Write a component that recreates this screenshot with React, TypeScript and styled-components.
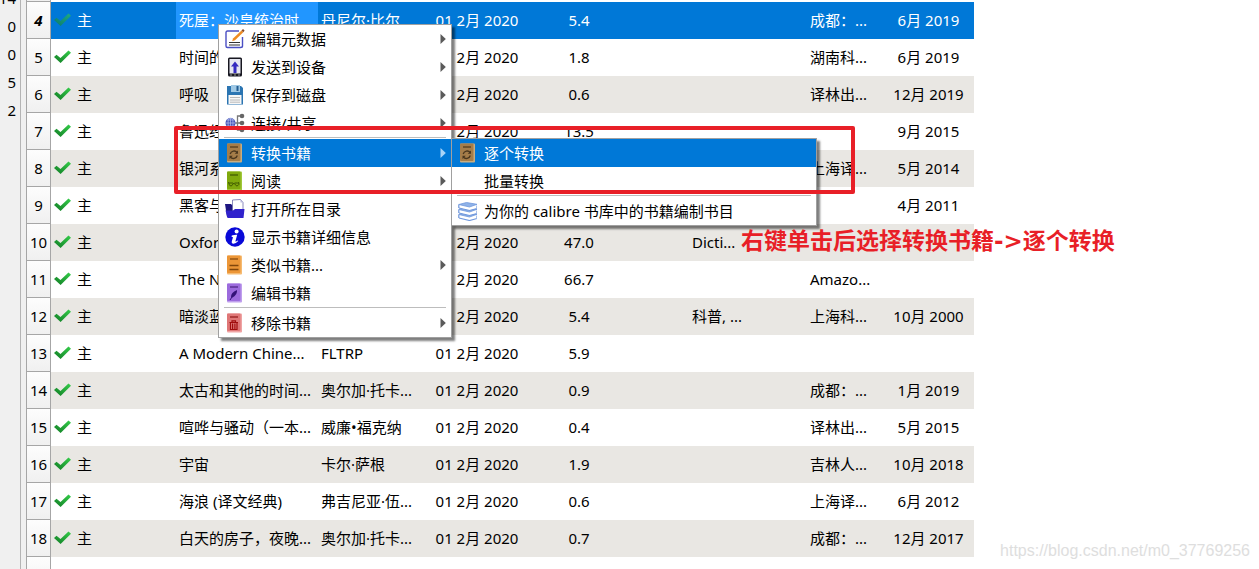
import React from "react";
import styled, { createGlobalStyle } from "styled-components";

const GlobalStyle = createGlobalStyle`
  * { box-sizing: border-box; }
  body {
    margin: 0;
    background: #fff;
    color: #000;
    font: 15px/20px "Noto Sans", "Noto Sans CJK SC", sans-serif;
  }
`;

const Page = styled.main`
  position: relative;
  display: flex;
  height: 100vh;
  overflow: hidden;
`;

const Sidebar = styled.aside`
  flex: none;
  width: 21px;
  height: 100%;
  background: #f0f0f0;
  border-right: 1px solid #b4b4b4;
`;

const CountList = styled.ul`
  list-style: none;
  margin: -16px 0 0;
  padding: 0;
  display: flex;
  flex-direction: column;
  align-items: flex-end;
`;

const Count = styled.li`
  height: 28px;
  line-height: 28px;
  padding-right: 4px;
`;

const Splitter = styled.div`
  flex: none;
  width: 5px;
  background: #f0f0f0;
`;

const Books = styled.div`
  flex: 1;
  min-width: 0;
  overflow: hidden;
`;

const Table = styled.table`
  table-layout: fixed;
  width: 948px;
  border-collapse: separate;
  border-spacing: 0;
`;

const Row = styled.tr<{ $selected?: boolean }>`
  height: 37px;
  background: #fff;
  color: ${(p) => (p.$selected ? "#fff" : "#000")};
  &:nth-child(even) {
    background: ${(p) => (p.$selected ? "#0078d7" : "#e9e7e3")};
  }
`;

const CutRow = styled.tr`
  height: 2px;
`;

const CutHead = styled.th`
  padding: 0;
  background: #f0f0f0;
  border: solid #a6a6a6;
  border-width: 0 1px 1px;
`;

const RowHead = styled.th<{ $current?: boolean }>`
  padding: 0;
  text-align: center;
  color: #000;
  font-weight: ${(p) => (p.$current ? 700 : 400)};
  font-style: ${(p) => (p.$current ? "italic" : "normal")};
  background: linear-gradient(#fdfdfd, #f0f0f0);
  border: solid #a6a6a6;
  border-width: 0 1px 1px;
`;

const Cell = styled.td<{ $center?: boolean; $focus?: boolean }>`
  padding: 0 3px 2px;
  white-space: nowrap;
  overflow: hidden;
  text-align: ${(p) => (p.$center ? "center" : "left")};
  background: ${(p) => (p.$focus ? "#2196ff" : "transparent")};
`;

const Device = styled.span`
  display: flex;
  align-items: center;
  gap: 6px;
`;

const Menu = styled.ul<{ $sub?: boolean }>`
  position: absolute;
  left: ${(p) => (p.$sub ? 451 : 218)}px;
  top: ${(p) => (p.$sub ? 138 : 24)}px;
  width: ${(p) => (p.$sub ? 366 : 234)}px;
  margin: 0;
  padding: 0;
  list-style: none;
  background: #fff;
  border: 1px solid #a0a0a0;
  box-shadow: 3px 3px 2px rgba(0, 0, 0, 0.5);
`;

const MenuButton = styled.button<{ $active?: boolean }>`
  display: flex;
  align-items: center;
  width: 100%;
  height: 28px;
  padding: 0 5px 0 6px;
  gap: 6px;
  border: 0;
  font: inherit;
  text-align: left;
  white-space: nowrap;
  color: ${(p) => (p.$active ? "#fff" : "#000")};
  background: ${(p) => (p.$active ? "#0078d7" : "transparent")};
`;

const IconSlot = styled.span`
  display: flex;
  flex: none;
  width: 20px;
  height: 20px;
`;

const Label = styled.span`
  flex: 1;
`;

const Separator = styled.li`
  height: 2px;
  margin: 0 5px;
  border-top: 1px solid #bdbdbd;
`;

const Highlight = styled.div`
  position: absolute;
  left: 174px;
  top: 126px;
  width: 681px;
  height: 68px;
  border: 4px solid #e81f27;
  border-radius: 2px;
  pointer-events: none;
`;

const Note = styled.p`
  position: absolute;
  left: 741px;
  top: 226px;
  margin: 0;
  font-family: "DejaVu Sans", "Noto Sans CJK SC", sans-serif;
  font-size: 23px;
  line-height: 30px;
  font-weight: 700;
  white-space: nowrap;
  color: #e81f27;
`;

const Watermark = styled.p`
  position: absolute;
  right: 9px;
  bottom: 8px;
  margin: 0;
  font: 16px/20px "Liberation Sans", sans-serif;
  color: #dedede;
`;

const Check = ({ faded }: { faded?: boolean }) => (
  <svg width="17" height="14" viewBox="0 0 17 14" opacity={faded ? 0.6 : 1}>
    <defs>
      <linearGradient id="tick" x1="0" x2="1" y1="1" y2="0">
        <stop offset="0" stopColor="#117a25" />
        <stop offset="1" stopColor="#35cf4a" />
      </linearGradient>
    </defs>
    <path d="M0 7l2.5-2.3L6.500 8 14.500.6 17 2.800 6.600 13z" fill="url(#tick)" />
  </svg>
);

const Arrow = ({ active }: { active?: boolean }) => (
  <svg width="6" height="10" viewBox="0 0 6 10">
    <path d="M0.500 0L5.800 5 0.500 10z" fill={active ? "#a9d4f7" : "#5a5a5a"} />
  </svg>
);

const BookIcon = ({ fill, edge, ink, children }: { fill: string; edge: string; ink: string; children: React.ReactNode }) => (
  <svg width="20" height="20" viewBox="0 0 20 20">
    <rect x="2" y="0.500" width="15" height="19" rx="1" fill={edge} />
    <rect x="2" y="0.500" width="13.500" height="17.500" rx="1" fill={fill} />
    <path d="M5 4h8" stroke={ink} strokeWidth="1.200" />
    {children}
  </svg>
);

const icons: Record<string, React.ReactNode> = {
  edit: (
    <svg width="20" height="20" viewBox="0 0 20 20">
      <path d="M14 2H2.500Q1 2 1 3.500v13.500Q1 18.500 2.500 18.500h13Q17.500 18.500 17.500 17V8" fill="#fff" stroke="#4a4fc4" strokeWidth="1.400" />
      <path d="M4 13.500h11M4 16h11" stroke="#333" strokeWidth="1.100" />
      <path d="M8 9.500L16.500 1.500l1.800 1.700-8.300 8-2.800 1z" fill="#ef8c22" />
      <path d="M16.500 1.500L18 0l1.600 1.500-1.300 1.700z" fill="#8c4a20" />
    </svg>
  ),
  device: (
    <svg width="20" height="20" viewBox="0 0 20 20">
      <rect x="3" y="0.500" width="14" height="19" rx="1.500" fill="#171720" />
      <path d="M4.500 2h11v14.500h-11z" fill="#e6e7f1" />
      <path d="M10 4.500l4 5h-2.500v6.500h-3V9.500H6z" fill="#352bc0" />
      <path d="M5 18h2m2 0h2m2 0h2" stroke="#999" />
    </svg>
  ),
  save: (
    <svg width="20" height="20" viewBox="0 0 20 20">
      <path d="M2 1h14l2 2v16.500H2z" fill="#2b75b2" />
      <path d="M6 0h9v7H6z" fill="#9fc8e4" />
      <path d="M11.500 1h2v5h-2z" fill="#215d92" />
      <path d="M3.500 10h13v9h-13z" fill="#f6f6f6" />
      <path d="M5 12.500h10M5 15h10M5 17.200h10" stroke="#aaa" strokeWidth=".8" />
    </svg>
  ),
  share: (
    <svg width="20" height="20" viewBox="0 0 20 20">
      <path d="M9 10h8M12.500 10V3H17M12.500 10v7H17" fill="none" stroke="#777" strokeWidth="1.300" />
      <circle cx="5.500" cy="10" r="5" fill="#4453b8" />
      <path d="M.5 10h10M5.500 5v10M2 7h7M2 13h7" stroke="#b9c3ee" strokeWidth=".7" />
      <ellipse cx="5.500" cy="10" rx="2.500" ry="5" fill="none" stroke="#b9c3ee" strokeWidth=".7" />
      <circle cx="17" cy="3" r="2.300" fill="#666" />
      <circle cx="17" cy="10" r="2.300" fill="#666" />
      <circle cx="17" cy="17" r="2.300" fill="#666" />
    </svg>
  ),
  convert: (
    <BookIcon fill="#a57d49" edge="#c9ad7f" ink="#4c371b">
      <path d="M5.200 11a4 4 0 0 1 7-1.500M12.300 12.500a4 4 0 0 1-7 1.500" fill="none" stroke="#4a371e" strokeWidth="1.300" />
      <path d="M13 7.500v3.300H9.700zM4.500 16v-3.300h3.300z" fill="#4a371e" />
    </BookIcon>
  ),
  view: (
    <BookIcon fill="#80a90d" edge="#a1c83b" ink="#3f5800">
      <path d="M3 11.500l1.500.5h3.500l.8 1 .8-1h3l1.500-.5" fill="none" stroke="#3f5800" />
      <path d="M4 12v1.500q2.300 3 4-.5M9.800 13q2 3.500 4 .5V12" fill="none" stroke="#3f5800" />
    </BookIcon>
  ),
  folder: (
    <svg width="20" height="20" viewBox="0 0 20 20">
      <path d="M0 5h6l2 2h9v11H2z" fill="#1d1681" />
      <path d="M7.500 1l8-.5 2.500 3v9H7.500z" fill="#fff" stroke="#6c6cad" strokeWidth=".8" />
      <path d="M15.500.5v3H18z" fill="#b9b9dd" />
      <path d="M0.500 11.500h7.500l2-1.500h9.500L18.500 19H2.500z" fill="#3022cc" />
    </svg>
  ),
  info: (
    <svg width="20" height="20" viewBox="0 0 20 20">
      <circle cx="10" cy="10" r="9.700" fill="#0909d8" />
      <circle cx="11.600" cy="4.500" r="2" fill="#fff" />
      <path d="M6.800 8.500q3-1 5.400-.8l-1.800 6.500q.3.700 2.400-.8l.5.700q-2.800 3-5.300 2.700-1.800-.4-1.200-2.600l1.200-4-1.500-.5z" fill="#fff" />
    </svg>
  ),
  similar: (
    <BookIcon fill="#ec9637" edge="#f6bb72" ink="#81460b">
      <path d="M4.500 10.500h9M4.500 14.500h9" stroke="#81460b" strokeWidth="1.500" />
    </BookIcon>
  ),
  editBook: (
    <BookIcon fill="#9c6bdd" edge="#c0a0ed" ink="#492080">
      <path d="M6 14.500q-.5-5 6-7.500.5 5-4.500 7.500z" fill="#331277" />
      <path d="M5 17l3-4.500" stroke="#331277" />
    </BookIcon>
  ),
  remove: (
    <BookIcon fill="#df7777" edge="#efa4a4" ink="#8d1515">
      <path d="M4.500 9.500h8.500M7 9V7.800h3.500V9" fill="none" stroke="#a00d0d" strokeWidth="1.200" />
      <path d="M5.500 10v6.500H12V10M7.600 10.500v5.500M9.900 10.500v5.500" fill="none" stroke="#a00d0d" strokeWidth="1.200" />
    </BookIcon>
  ),
  catalog: (
    <svg width="20" height="20" viewBox="0 0 20 20">
      {[10, 5, 0].map((y) => (
        <g key={y} transform={`translate(0 ${y})`}>
          <path d="M1 4v3l10.500 2.500L18.500 7.500V4z" fill="#fff" />
          <path d="M1 7l10.500 2.500 7.500-2" fill="none" stroke="#6f97dc" strokeWidth="1.200" />
          <path d="M18.500 4.500v3" stroke="#a9c0ea" />
          <path d="M0.800 3.500L8.500 1.500l10.500 1.800-7.500 2.700z" fill="#8fb2e8" stroke="#6f97dc" strokeWidth=".8" />
          <path d="M0.800 3.500v3.500" stroke="#6f97dc" strokeWidth="1.200" />
        </g>
      ))}
    </svg>
  ),
};

interface Item {
  label: string;
  icon?: string;
  arrow?: boolean;
  active?: boolean;
}

const mainMenu: (Item | null)[] = [
  { label: "编辑元数据", icon: "edit", arrow: true },
  { label: "发送到设备", icon: "device", arrow: true },
  { label: "保存到磁盘", icon: "save", arrow: true },
  { label: "连接/共享", icon: "share", arrow: true },
  null,
  { label: "转换书籍", icon: "convert", arrow: true, active: true },
  { label: "阅读", icon: "view", arrow: true },
  { label: "打开所在目录", icon: "folder" },
  { label: "显示书籍详细信息", icon: "info" },
  { label: "类似书籍...", icon: "similar", arrow: true },
  { label: "编辑书籍", icon: "editBook" },
  null,
  { label: "移除书籍", icon: "remove", arrow: true },
];

const subMenu: (Item | null)[] = [
  { label: "逐个转换", icon: "convert", active: true },
  { label: "批量转换" },
  null,
  { label: "为你的 calibre 书库中的书籍编制书目", icon: "catalog" },
];

const ContextMenu = ({ items, sub }: { items: (Item | null)[]; sub?: boolean }) => (
  <Menu $sub={sub} role="menu">
    {items.map((item, i) =>
      item === null ? (
        <Separator key={i} role="separator" />
      ) : (
        <li key={i} role="none">
          <MenuButton type="button" role="menuitem" $active={item.active}>
            <IconSlot>{item.icon && icons[item.icon]}</IconSlot>
            <Label>{item.label}</Label>
            {item.arrow && <Arrow active={item.active} />}
          </MenuButton>
        </li>
      )
    )}
  </Menu>
);

// number, title, author, date added, size, tags, publisher, published
type Book = [number, string, string, string, string, string, string, string];

const added = "01 2月 2020";

const books: Book[] = [
  [4, "死屋：沙皇统治时...", "丹尼尔·比尔", added, "5.4", "", "成都：...", "6月 2019"],
  [5, "时间的秩序", "", added, "1.8", "", "湖南科...", "6月 2019"],
  [6, "呼吸", "", added, "0.6", "", "译林出...", "12月 2019"],
  [7, "鲁迅经典", "", added, "13.5", "", "", "9月 2015"],
  [8, "银河系", "", "", "", "", "上海译...", "5月 2014"],
  [9, "黑客与", "", "", "", "", "", "4月 2011"],
  [10, "Oxford", "", added, "47.0", "Dicti...", "", ""],
  [11, "The New", "", added, "66.7", "", "Amazo...", ""],
  [12, "暗淡蓝点", "", added, "5.4", "科普, ...", "上海科...", "10月 2000"],
  [13, "A Modern Chine...", "FLTRP", added, "5.9", "", "", ""],
  [14, "太古和其他的时间...", "奥尔加·托卡...", added, "0.9", "", "成都：...", "1月 2019"],
  [15, "喧哗与骚动（一本...", "威廉•福克纳", added, "0.4", "", "译林出...", "5月 2015"],
  [16, "宇宙", "卡尔·萨根", added, "1.9", "", "吉林人...", "10月 2018"],
  [17, "海浪 (译文经典)", "弗吉尼亚·伍...", added, "0.6", "", "上海译...", "6月 2012"],
  [18, "白天的房子，夜晚...", "奥尔加·托卡...", added, "0.7", "", "成都：...", "12月 2017"],
];

const columns = [25, 125, 142, 112, 94, 110, 55, 118, 76, 91];

export default function App() {
  return (
    <Page>
      <GlobalStyle />
      <Sidebar>
        <CountList>
          {["14", "0", "0", "5", "2"].map((n, i) => (
            <Count key={i}>{n}</Count>
          ))}
        </CountList>
      </Sidebar>
      <Splitter />
      <Books>
        <Table>
          <colgroup>
            {columns.map((w, i) => (
              <col key={i} width={w} />
            ))}
          </colgroup>
          <tbody>
            <CutRow>
              <CutHead />
            </CutRow>
            {books.map(([no, title, author, date, size, tags, publisher, published]) => {
              const selected = no === 4;
              return (
                <Row key={no} $selected={selected}>
                  <RowHead scope="row" $current={selected}>{no}</RowHead>
                  <Cell>
                    <Device>
                      <Check faded={selected} />
                      主
                    </Device>
                  </Cell>
                  <Cell $focus={selected}>{title}</Cell>
                  <Cell>{author}</Cell>
                  <Cell $center>{date}</Cell>
                  <Cell $center>{size}</Cell>
                  <Cell />
                  <Cell>{tags}</Cell>
                  <Cell>{publisher}</Cell>
                  <Cell $center>{published}</Cell>
                </Row>
              );
            })}
            <Row as="tr">
              <RowHead />
            </Row>
          </tbody>
        </Table>
      </Books>
      <ContextMenu items={mainMenu} />
      <ContextMenu items={subMenu} sub />
      <Highlight />
      <Note>右键单击后选择转换书籍-&gt;逐个转换</Note>
      <Watermark>https://blog.csdn.net/m0_37769256</Watermark>
    </Page>
  );
}
